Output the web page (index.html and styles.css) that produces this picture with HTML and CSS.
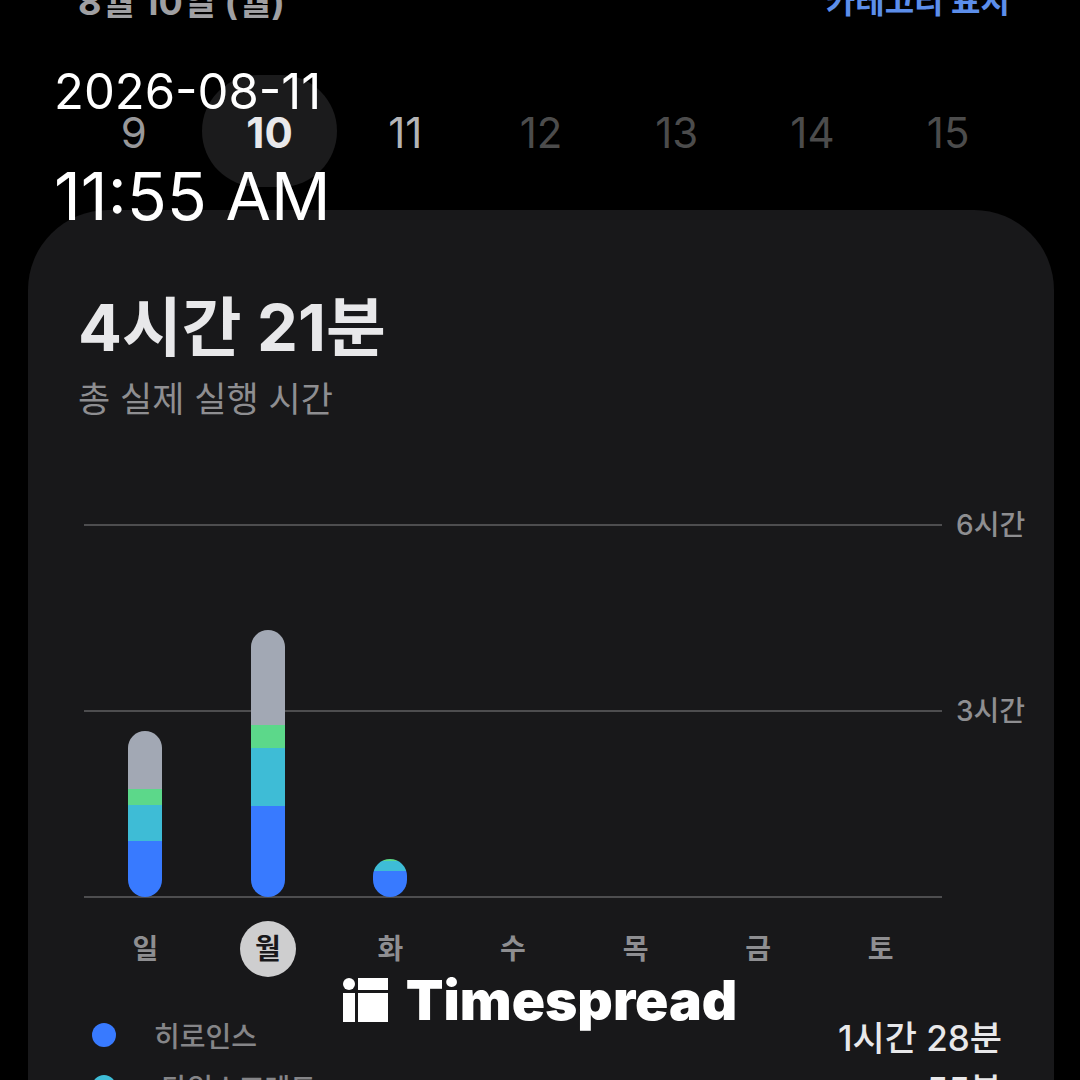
FILE: index.html
```html
<!DOCTYPE html>
<html lang="ko">
<head>
  <meta charset="UTF-8" />
  <meta name="viewport" content="width=device-width, initial-scale=1.0"/>
  <title>Timespread</title>
  <link rel="stylesheet" href="styles.css">
</head>
<body>
  <div class="screen">
    <header class="topbar">
      <h1 class="topbar-title">8월 10일 (월)</h1>
      <button type="button" class="category-btn">카테고리 표시</button>
    </header>

    <nav class="dates" aria-label="날짜">
      <button type="button" class="date past">9</button>
      <button type="button" class="date selected">10</button>
      <button type="button" class="date today">11</button>
      <button type="button" class="date">12</button>
      <button type="button" class="date">13</button>
      <button type="button" class="date">14</button>
      <button type="button" class="date">15</button>
    </nav>

    <main class="card">
      <h2 class="total">4시간 21분</h2>
      <p class="subtitle">총 실제 실행 시간</p>

      <div class="chart">
        <div class="axis">
          <div class="axis-row"><span class="line"></span><span class="axis-label">6시간</span></div>
          <div class="axis-row"><span class="line"></span><span class="axis-label">3시간</span></div>
          <div class="axis-row"><span class="line"></span><span class="axis-label"></span></div>
        </div>
        <div class="bars">
          <div class="bar">
            <span class="gray" style="height: 58px"></span>
            <span class="green" style="height: 16px"></span>
            <span class="teal" style="height: 36px"></span>
            <span class="blue" style="height: 56px"></span>
          </div>
          <div class="bar">
            <span class="gray" style="height: 95px"></span>
            <span class="green" style="height: 23px"></span>
            <span class="teal" style="height: 58px"></span>
            <span class="blue" style="height: 91px"></span>
          </div>
          <div class="bar">
            <span class="green" style="height: 2px"></span>
            <span class="teal" style="height: 10px"></span>
            <span class="blue" style="height: 26px"></span>
          </div>
        </div>
      </div>

      <div class="days">
        <span class="day">일</span>
        <span class="day active">월</span>
        <span class="day">화</span>
        <span class="day">수</span>
        <span class="day">목</span>
        <span class="day">금</span>
        <span class="day">토</span>
      </div>

      <ul class="apps">
        <li class="app">
          <span class="dot blue"></span>
          <span class="app-name">히로인스</span>
          <span class="app-time">1시간 28분</span>
        </li>
        <li class="app">
          <span class="dot teal"></span>
          <span class="app-name">&nbsp;타임스프레드</span>
          <span class="app-time">55분</span>
        </li>
      </ul>
    </main>

    <!-- Time stamp and brand on top of the screen -->
    <div class="stamp">
      <div class="stamp-date">2026-08-11</div>
      <div class="stamp-time">11:55 AM</div>
    </div>
    <div class="brand">
      <svg class="brand-mark" viewBox="0 0 45 44" aria-hidden="true">
        <circle cx="6" cy="6" r="6"/>
        <rect x="15" y="0" width="30" height="12"/>
        <rect x="0" y="15" width="12" height="29"/>
        <rect x="15" y="15" width="30" height="29"/>
      </svg>
      <span class="brand-name">Timespread</span>
    </div>
  </div>
</body>
</html>
```

FILE: styles.css
```css
* {
  box-sizing: border-box;
}

body {
  margin: 0;
  background: #000;
  color: #e8e8ea;
  font-family: Inter, "Noto Sans CJK KR", sans-serif;
}

button {
  padding: 0;
  border: none;
  background: none;
  font-family: inherit;
  cursor: pointer;
}

.screen {
  position: relative;
  height: 100vh;
  overflow: hidden;
}

/* Header */
.topbar {
  display: flex;
  justify-content: space-between;
  align-items: flex-end;
  height: 22px;
  padding: 0 70px 0 78px;
  overflow: hidden;
}

.topbar-title,
.category-btn {
  margin: 0;
  font-size: 32px;
  line-height: 40px;
  font-weight: 700;
  color: #a0a0a3;
}

.topbar-title {
  font-size: 36px;
}

.category-btn {
  color: #5c8eea;
}

/* Date strip */
.dates {
  display: grid;
  grid-template-columns: repeat(7, 1fr);
  padding: 53px 64px 23px 66px;
}

.date {
  height: 112px;
  padding-top: 2px;
  border-radius: 60px;
  font-size: 42px;
  color: #4c4c4c;
}

.date.past {
  color: #98989a;
}

.date.today {
  color: #b4b4b6;
}

.date.selected {
  background: #1b1b1c;
  color: #e8e8ea;
  font-weight: 700;
}

/* Card */
.card {
  margin: 0 26px 0 28px;
  padding: 80px 24px 0 50px;
  min-height: 900px;
  border-radius: 80px 80px 0 0;
  background: #18181a;
}

.total {
  margin: 0;
  font-size: 65px;
  line-height: 76px;
  font-weight: 700;
}

.subtitle {
  margin: 8px 0 81px;
  font-size: 35px;
  line-height: 50px;
  color: #8e8e91;
}

/* Chart: axis and bars share one grid cell */
.chart {
  display: grid;
  padding-left: 6px;
}

.axis,
.bars {
  grid-area: 1 / 1;
}

.axis {
  display: flex;
  flex-direction: column;
  justify-content: space-between;
  height: 412px;
}

.axis-row {
  display: flex;
  align-items: center;
  gap: 14px;
  height: 40px;
}

.line {
  flex: 1;
  height: 2px;
  background: #4d4d4f;
}

.axis-label {
  width: 74px;
  font-size: 28px;
  line-height: 40px;
  font-weight: 500;
  white-space: nowrap;
  color: #8e8e91;
}

.bars {
  display: grid;
  grid-template-columns: repeat(7, 1fr);
  align-items: end;
  justify-items: center;
  margin: 0 88px 20px 0;
  z-index: 1;
}

.bar {
  display: flex;
  flex-direction: column;
  width: 34px;
  border-radius: 17px;
  overflow: hidden;
}

.gray {
  background: #a2a8b4;
}

.green {
  background: #5cd88a;
}

.teal {
  background: #3ebcd6;
}

.blue {
  background: #387aff;
}

.days {
  display: grid;
  grid-template-columns: repeat(7, 1fr);
  justify-items: center;
  margin: 4px 88px 0 6px;
}

.day {
  width: 56px;
  height: 56px;
  border-radius: 50%;
  font-size: 28px;
  line-height: 56px;
  font-weight: 600;
  text-align: center;
  color: #8e8e91;
}

.day.active {
  background: #cececf;
  color: #18181a;
  font-weight: 700;
}

/* App list */
.apps {
  margin: 0;
  padding: 32px 28px 0 14px;
  list-style: none;
}

.app {
  display: flex;
  align-items: center;
  height: 52px;
}

.dot {
  width: 24px;
  height: 24px;
  margin-right: 38px;
  border-radius: 50%;
}

.app-name {
  flex: 1;
  font-size: 28px;
  font-weight: 500;
  color: #858588;
}

.app-time {
  font-size: 35px;
  font-weight: 500;
}

/* Overlay */
.stamp {
  position: absolute;
  top: 61px;
  left: 54px;
  color: #fff;
}

.stamp-date {
  font-size: 49px;
  line-height: 62px;
}

.stamp-time {
  margin-top: 33px;
  font-size: 66px;
  line-height: 80px;
}

.brand {
  position: absolute;
  right: 0;
  bottom: 48px;
  left: 0;
  display: flex;
  justify-content: center;
  align-items: center;
  gap: 18px;
  color: #fff;
}

.brand-mark {
  width: 45px;
  height: 44px;
  fill: #fff;
}

.brand-name {
  font-size: 55px;
  line-height: 64px;
  font-weight: 900;
}
```
